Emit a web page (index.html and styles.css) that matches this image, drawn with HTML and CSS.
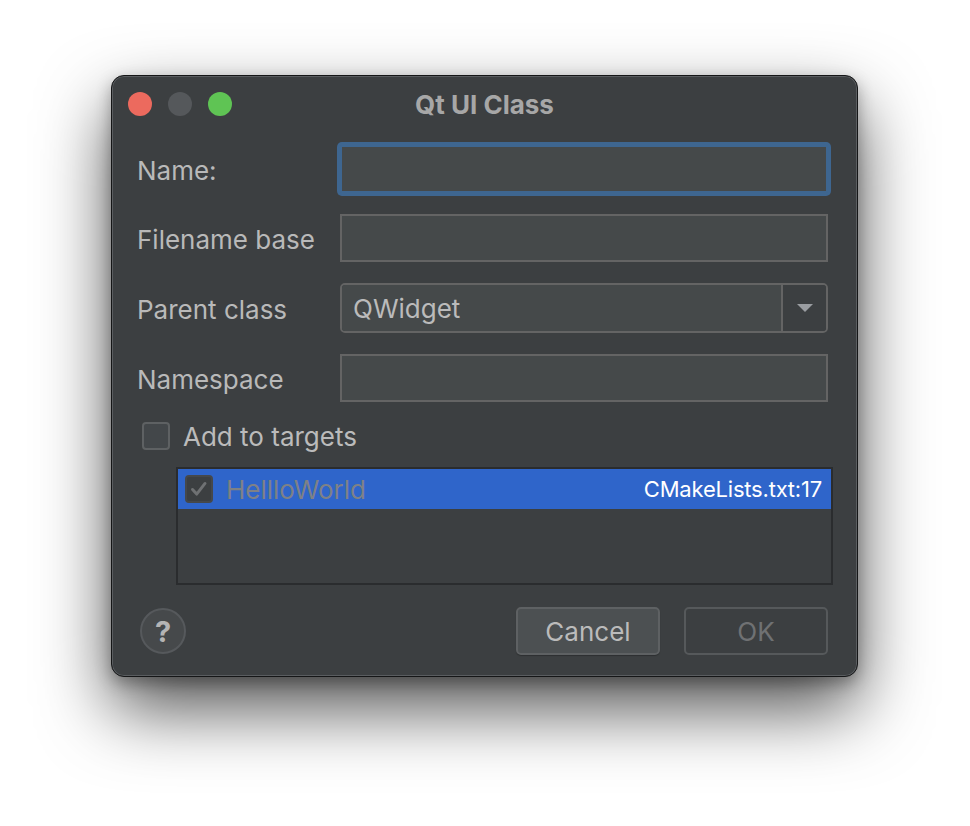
FILE: index.html
```html
<!DOCTYPE html>
<html>
<head>
<meta charset="utf-8">
<link rel="stylesheet" href="styles.css">
</head>
<body>
<div class="window">
  <div class="titlebar">
    <div class="lights">
      <span class="light red"></span>
      <span class="light gray"></span>
      <span class="light green"></span>
    </div>
    <div class="title">Qt UI Class</div>
  </div>
  <div class="form">
    <label class="label">Name:</label>
    <div class="field focused"></div>
    <label class="label">Filename base</label>
    <div class="field"></div>
    <label class="label">Parent class</label>
    <div class="combo">
      <div class="combo-value">QWidget</div>
      <div class="combo-arrow"><svg width="16" height="8" viewBox="0 0 16 8"><path d="M0 0H16L8 8Z" fill="#9a9da1"/></svg></div>
    </div>
    <label class="label">Namespace</label>
    <div class="field"></div>
  </div>
  <div class="check-row">
    <span class="checkbox"></span>
    <span class="check-label">Add to targets</span>
  </div>
  <div class="list">
    <div class="list-row">
      <span class="row-check"><svg width="26" height="26" viewBox="0 0 26 26"><path d="M6 13.5L10.5 18.5L19.5 7" fill="none" stroke="#6f7173" stroke-width="3.2" stroke-linecap="round" stroke-linejoin="round"/></svg></span>
      <span class="row-name">HellloWorld</span>
      <span class="row-file">CMakeLists.txt:17</span>
    </div>
  </div>
  <div class="footer">
    <div class="help">?</div>
    <div class="buttons">
      <div class="btn cancel">Cancel</div>
      <div class="btn ok">OK</div>
    </div>
  </div>
</div>
</body>
</html>
```

FILE: styles.css
```css
html, body {
  margin: 0;
  padding: 0;
  background: #ffffff;
}
body {
  font-family: Inter, "Liberation Sans", sans-serif;
  font-size: 26px;
  width: 970px;
  height: 826px;
  overflow: hidden;
}
.window {
  box-sizing: border-box;
  margin: 75px 0 0 111px;
  width: 747px;
  height: 602px;
  background: #3c3f41;
  border: 1px solid #151617;
  border-radius: 13px;
  box-shadow: inset 0 0 0 1px #5a5d60, 0 32px 70px rgba(0, 0, 0, 0.68), 0 6px 16px rgba(0, 0, 0, 0.3);
  display: flex;
  flex-direction: column;
}
.titlebar {
  height: 56px;
  display: flex;
  align-items: center;
  position: relative;
  padding-left: 16px;
}
.lights {
  display: flex;
  gap: 16px;
}
.light {
  width: 24px;
  height: 24px;
  border-radius: 50%;
  display: block;
}
.red { background: #ec6a5e; }
.gray { background: #55585b; }
.green { background: #5fc454; }
.title {
  position: absolute;
  left: 0;
  right: 0;
  top: 0;
  bottom: 0;
  display: flex;
  align-items: center;
  justify-content: center;
  font-weight: 700;
  color: #a7a7a7;
  font-size: 26px;
  pointer-events: none;
}
.form {
  display: grid;
  grid-template-columns: 203px 488px;
  row-gap: 21px;
  padding: 13px 0 0 25px;
  align-items: center;
}
.label {
  color: #b9b9b9;
  padding-top: 2px;
}
.field {
  box-sizing: border-box;
  height: 48px;
  background: #45494a;
  border: 2px solid #646464;
}
.field.focused {
  border-color: #3e6690;
  box-shadow: 0 0 0 3px #3e6690;
  border-radius: 2px;
}
.combo {
  box-sizing: border-box;
  height: 50px;
  border: 2px solid #646464;
  border-radius: 5px;
  display: flex;
  overflow: hidden;
}
.combo-value {
  flex: 1;
  background: #45494a;
  color: #bbbbbb;
  display: flex;
  align-items: center;
  padding-left: 11px;
  border-right: 2px solid #646464;
}
.combo-arrow {
  width: 43px;
  background: #3c3f41;
  display: flex;
  align-items: center;
  justify-content: center;
}
.check-row {
  display: flex;
  align-items: center;
  margin: 20px 0 0 30px;
  height: 28px;
}
.checkbox {
  box-sizing: border-box;
  width: 28px;
  height: 28px;
  border: 2px solid #5e6163;
  border-radius: 4px;
  background: #43474a;
}
.check-label {
  margin-left: 13px;
  color: #bbbbbb;
}
.list {
  box-sizing: border-box;
  margin: 17px 24px 0 64px;
  height: 118px;
  border: 2px solid #2a2c2e;
  background: #3c3f41;
}
.list-row {
  height: 40px;
  background: #2f65ca;
  display: flex;
  align-items: center;
  padding: 0 9px 0 7px;
}
.row-check {
  box-sizing: border-box;
  width: 28px;
  height: 28px;
  border: 2px solid #45484b;
  border-radius: 4px;
  background: #3c3f41;
  display: flex;
  align-items: center;
  justify-content: center;
}
.row-check svg { display: block; }
.row-name {
  margin-left: 13px;
  color: #7e8186;
  flex: 1;
}
.row-file {
  color: #ffffff;
  font-size: 22px;
  letter-spacing: -0.2px;
}
.footer {
  display: flex;
  align-items: center;
  justify-content: space-between;
  margin-top: 22px;
  padding: 0 29px 0 28px;
}
.help {
  box-sizing: border-box;
  width: 46px;
  height: 46px;
  border-radius: 50%;
  background: #46494b;
  border: 2px solid #56595c;
  color: #b4b4b4;
  font-weight: 700;
  font-size: 29px;
  display: flex;
  align-items: center;
  justify-content: center;
}
.buttons {
  display: flex;
  gap: 24px;
}
.btn {
  box-sizing: border-box;
  width: 144px;
  height: 48px;
  border: 2px solid #5e6163;
  border-radius: 5px;
  display: flex;
  align-items: center;
  justify-content: center;
}
.cancel {
  background: #4c5052;
  color: #bbbbbb;
  box-shadow: 0 1px 1px rgba(0, 0, 0, 0.25);
}
.ok {
  background: #3c3f41;
  color: #6f7173;
  border-color: #56595b;
}
```
